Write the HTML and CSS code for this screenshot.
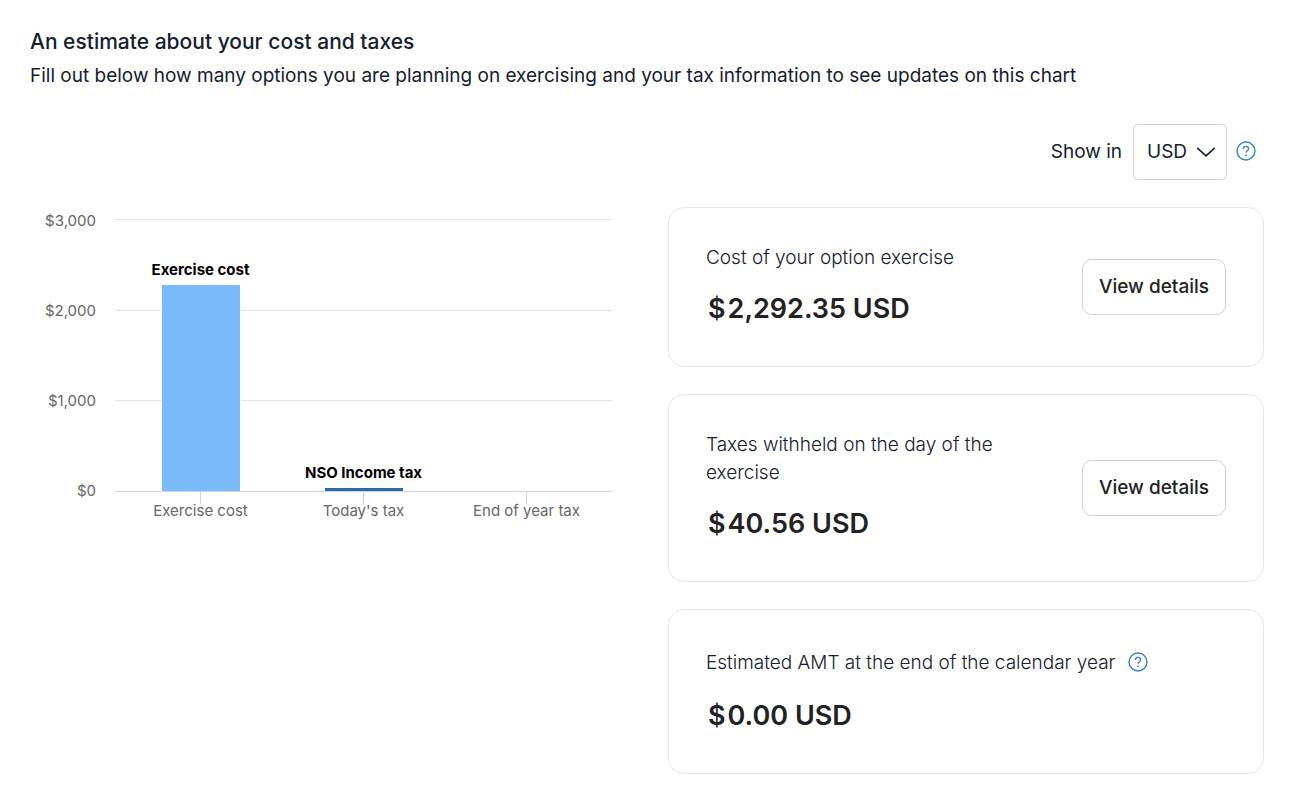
FILE: index.html
```html
<!DOCTYPE html>
<html lang="en">

<head>
    <meta charset="UTF-8">
    <meta name="viewport" content="width=device-width, initial-scale=1.0">
    <title>Cost and tax estimate</title>
    <link rel="stylesheet" href="styles.css">
</head>

<body>

    <main class="estimate">
        <header class="intro">
            <h1>An estimate about your cost and taxes</h1>
            <p>Fill out below how many options you are planning on exercising and your tax information to see updates on this chart</p>
        </header>

        <div class="currency">
            <label for="currency">Show in</label>
            <div class="select">
                <select id="currency">
                    <option>USD</option>
                </select>
                <svg class="chevron" viewBox="0 0 20 12" aria-hidden="true">
                    <path d="M1.2 1.8 10 9.8 18.8 1.8" />
                </svg>
            </div>
            <button class="help" type="button" aria-label="About currencies">
                <svg viewBox="0 0 20 20" aria-hidden="true">
                    <circle cx="10" cy="10" r="9" />
                    <path d="M7.4 7.9C7.4 6.3 8.5 5.4 10 5.4s2.6 1 2.6 2.4c0 1.9-2.5 1.9-2.5 4" />
                    <path class="dot" d="M10.1 13.6v1.4" />
                </svg>
            </button>
        </div>

        <div class="content">
            <section class="chart" aria-label="Cost and taxes chart">
                <div class="y-axis">
                    <span>$3,000</span>
                    <span>$2,000</span>
                    <span>$1,000</span>
                    <span>$0</span>
                </div>
                <div class="plot">
                    <div class="lines">
                        <i></i>
                        <i></i>
                        <i></i>
                    </div>
                    <div class="bars">
                        <div class="column">
                            <b>Exercise cost</b>
                            <div class="bar cost" style="height: 76%"></div>
                        </div>
                        <div class="column">
                            <b>NSO Income tax</b>
                            <div class="bar tax" style="height: 1.35%"></div>
                        </div>
                        <div class="column"></div>
                    </div>
                </div>
                <div class="x-axis">
                    <span>Exercise cost</span>
                    <span>Today's tax</span>
                    <span>End of year tax</span>
                </div>
            </section>

            <div class="cards">
                <section class="card">
                    <div class="info">
                        <h2>Cost of your option exercise</h2>
                        <p class="amount"><span>$</span><span>2,292.35 USD</span></p>
                    </div>
                    <button class="details" type="button">View details</button>
                </section>

                <section class="card">
                    <div class="info">
                        <h2>Taxes withheld on the day of the exercise</h2>
                        <p class="amount"><span>$</span><span>40.56 USD</span></p>
                    </div>
                    <button class="details" type="button">View details</button>
                </section>

                <section class="card">
                    <div class="info">
                        <div class="heading">
                            <h2>Estimated AMT at the end of the calendar year</h2>
                            <button class="help" type="button" aria-label="About AMT">
                                <svg viewBox="0 0 20 20" aria-hidden="true">
                                    <circle cx="10" cy="10" r="9" />
                                    <path d="M7.4 7.9C7.4 6.3 8.5 5.4 10 5.4s2.6 1 2.6 2.4c0 1.9-2.5 1.9-2.5 4" />
                                    <path class="dot" d="M10.1 13.6v1.4" />
                                </svg>
                            </button>
                        </div>
                        <p class="amount"><span>$</span><span>0.00 USD</span></p>
                    </div>
                </section>
            </div>
        </div>
    </main>

</body>

</html>
```
FILE: styles.css
```css
* {
    box-sizing: border-box;
}

body {
    font-family: Inter, 'Liberation Sans', sans-serif;
    font-size: 19px;
    line-height: 28px;
    margin: 0;
    background-color: #fff;
    color: #14202e;
}

h1,
h2,
p {
    margin: 0;
}

button,
select {
    font: inherit;
    color: inherit;
    cursor: pointer;
}

.estimate {
    padding: 25px 30px 38px;
}

.intro h1 {
    font-size: 21px;
    font-weight: 500;
    line-height: 34px;
    margin-bottom: 3px;
}

.currency {
    display: flex;
    align-items: center;
    justify-content: flex-end;
    margin-top: 34px;
    padding-right: 8px;
}

.select {
    display: grid;
    align-items: center;
    margin: 0 9px 0 11px;
}

.select select,
.select .chevron {
    grid-area: 1 / 1;
}

.select select {
    appearance: none;
    width: 94px;
    height: 56px;
    padding: 0 13px;
    border: 1px solid #d2d2d2;
    border-radius: 5px;
    background-color: #fff;
}

.chevron {
    justify-self: end;
    width: 20px;
    height: 12px;
    margin-right: 11px;
    fill: none;
    stroke: #14202e;
    stroke-width: 1.6;
    pointer-events: none;
}

.help {
    display: flex;
    padding: 0 0 2px;
    border: none;
    background: none;
}

.help svg {
    width: 20px;
    height: 20px;
    fill: none;
    stroke: #3d7fc9;
    stroke-width: 1.4;
}

.help .dot {
    stroke-width: 1.6;
}

.content {
    display: grid;
    grid-template-columns: 1fr 1fr;
    align-items: start;
    gap: 42px;
    margin-top: 27px;
}

/* chart */

.chart {
    display: grid;
    grid-template-columns: 66px 1fr;
    column-gap: 19px;
    padding: 12px 14px 0 0;
    font-size: 15px;
    line-height: 20px;
    color: #666;
}

.y-axis {
    display: flex;
    flex-direction: column;
    justify-content: space-between;
    margin: -8px 0 -9px;
    text-align: right;
}

.plot {
    display: grid;
    height: 273px;
    border-bottom: 1px solid #ccd3e6;
}

.lines,
.bars {
    grid-area: 1 / 1;
}

.lines {
    display: grid;
    grid-template-rows: repeat(3, 1fr);
}

.lines i {
    border-top: 1px solid #e3e3e3;
}

.bars,
.x-axis {
    display: grid;
    grid-template-columns: repeat(3, 1fr);
    padding: 0 4px;
}

.column {
    display: flex;
    flex-direction: column;
    align-items: center;
    justify-content: flex-end;
    height: 272px;
}

.column b {
    margin-bottom: 4px;
    color: #000;
}

.bar {
    width: 80px;
    border: 1px solid #fff;
    border-bottom: none;
    flex-shrink: 0;
}

.cost {
    background-color: #7abaf8;
}

.tax {
    background-color: #2a68a8;
}

.x-axis {
    grid-column: 2;
    text-align: center;
}

.x-axis span::before {
    content: "";
    display: block;
    width: 1px;
    height: 12px;
    margin: 0 auto -3px;
    background-color: #ccd3e6;
}

/* cards */

.cards {
    display: grid;
    gap: 27px;
}

.card {
    display: flex;
    align-items: center;
    justify-content: space-between;
    gap: 37px;
    padding: 36px 37px;
    border: 1px solid #e8e8e8;
    border-radius: 16px;
}

.card h2 {
    font-size: 19px;
    font-weight: 300;
}

.heading {
    display: flex;
    align-items: center;
    gap: 13px;
    min-height: 33px;
}

.amount {
    display: flex;
    gap: 2px;
    margin-top: 16px;
    padding-left: 2px;
    font-size: 27px;
    font-weight: 600;
    line-height: 42px;
    color: #222;
}

.details {
    flex-shrink: 0;
    height: 56px;
    padding: 0 16px;
    border: 1px solid #d2d2d2;
    border-radius: 10px;
    background-color: #fff;
    color: #222;
    font-weight: 500;
}
```
